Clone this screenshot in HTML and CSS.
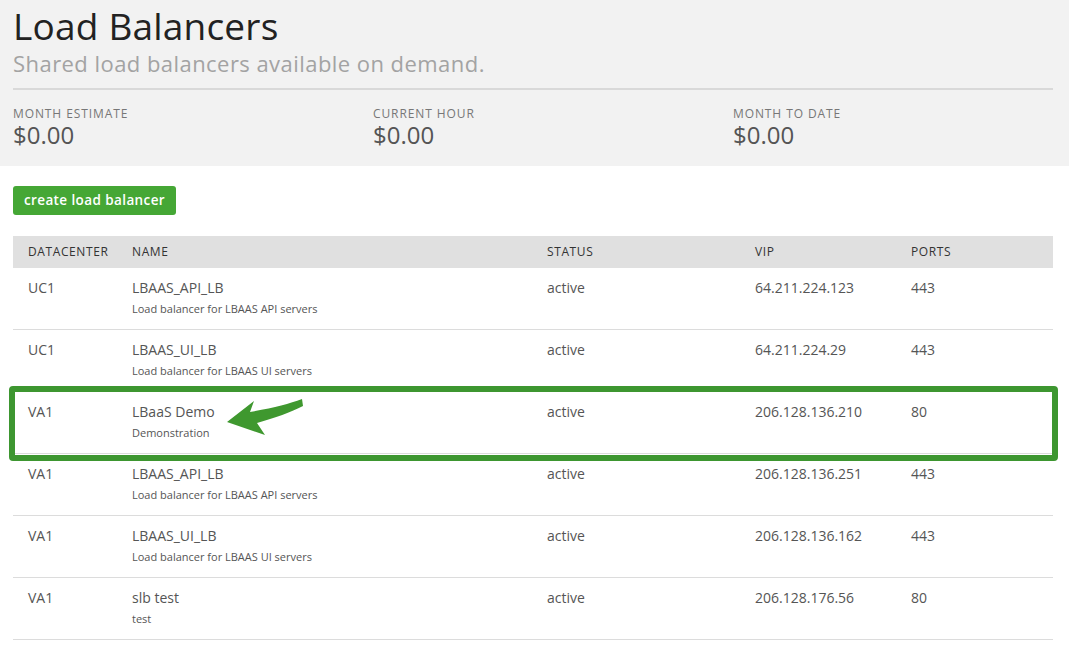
FILE: index.html
```html
<!DOCTYPE html>
<html>
<head>
<meta charset="utf-8">
<link rel="stylesheet" href="styles.css">
</head>
<body>
<header class="hero">
  <h1 class="title">Load Balancers</h1>
  <p class="subtitle">Shared load balancers available on demand.</p>
  <div class="stats">
    <div class="stat"><div class="stat-label">Month Estimate</div><div class="stat-value">$0.00</div></div>
    <div class="stat"><div class="stat-label">Current Hour</div><div class="stat-value">$0.00</div></div>
    <div class="stat"><div class="stat-label">Month to Date</div><div class="stat-value">$0.00</div></div>
  </div>
</header>
<main class="content">
  <button class="btn-create">create load balancer</button>
  <div class="table-wrap">
    <table class="lb-table">
      <colgroup>
        <col class="c-dc"><col class="c-name"><col class="c-status"><col class="c-vip"><col class="c-ports">
      </colgroup>
      <thead>
        <tr><th>Datacenter</th><th>Name</th><th>Status</th><th>VIP</th><th>Ports</th></tr>
      </thead>
      <tbody>
        <tr><td>UC1</td><td><div class="name">LBAAS_API_LB</div><div class="desc">Load balancer for LBAAS API servers</div></td><td>active</td><td>64.211.224.123</td><td>443</td></tr>
        <tr><td>UC1</td><td><div class="name">LBAAS_UI_LB</div><div class="desc">Load balancer for LBAAS UI servers</div></td><td>active</td><td>64.211.224.29</td><td>443</td></tr>
        <tr><td>VA1</td><td><div class="name">LBaaS Demo</div><div class="desc">Demonstration</div></td><td>active</td><td>206.128.136.210</td><td>80</td></tr>
        <tr><td>VA1</td><td><div class="name">LBAAS_API_LB</div><div class="desc">Load balancer for LBAAS API servers</div></td><td>active</td><td>206.128.136.251</td><td>443</td></tr>
        <tr><td>VA1</td><td><div class="name">LBAAS_UI_LB</div><div class="desc">Load balancer for LBAAS UI servers</div></td><td>active</td><td>206.128.136.162</td><td>443</td></tr>
        <tr><td>VA1</td><td><div class="name">slb test</div><div class="desc">test</div></td><td>active</td><td>206.128.176.56</td><td>80</td></tr>
      </tbody>
    </table>
    <div class="highlight"></div>
    <svg class="arrow" width="90" height="40" viewBox="0 0 90 40">
      <path d="M2 24 L29 3 L25 14 C48 10 64 6 77 1 L78 8 C66 14 50 20 32 25 L40 37 Z" fill="#3f982f"/>
    </svg>
  </div>
</main>
</body>
</html>
```
FILE: styles.css
```css
* { box-sizing: border-box; }
html, body { margin: 0; padding: 0; background: #fff; }
body {
  font-family: "Open Sans", "Noto Sans", sans-serif;
  color: #555;
  width: 1069px;
  overflow: hidden;
}
.hero {
  background: #f2f2f2;
  padding: 4px 16px 16px 13px;
  height: 166px;
}
.title {
  margin: 0;
  font-weight: 400;
  font-size: 37px;
  line-height: 44px;
  color: #222;
  letter-spacing: 0.2px;
}
.subtitle {
  margin: 0;
  font-size: 22px;
  line-height: 30px;
  color: #a3a3a3;
  letter-spacing: 0.45px;
  padding-bottom: 10px;
  border-bottom: 2px solid #d9d9d9;
}
.stats {
  display: flex;
  padding-top: 17px;
}
.stat { flex: 0 0 360px; }
.stat:last-child { flex: 1 1 auto; }
.stat-label {
  text-transform: uppercase;
  font-size: 12px;
  line-height: 14px;
  letter-spacing: 0.9px;
  color: #777;
}
.stat-value {
  font-size: 24px;
  line-height: 28px;
  color: #555;
}
.content {
  padding: 20px 16px 0 13px;
}
.btn-create {
  display: block;
  background: #45a735;
  color: #fff;
  border: none;
  border-radius: 3px;
  font-family: "Open Sans", "Noto Sans", sans-serif;
  font-weight: 600;
  font-size: 13.5px;
  letter-spacing: 0.4px;
  line-height: 29px;
  height: 29px;
  width: 163px;
  padding: 0;
  margin-bottom: 21px;
}
.table-wrap { position: relative; width: 1040px; }
.lb-table {
  width: 1040px;
  border-collapse: collapse;
  table-layout: fixed;
}
.c-dc { width: 104px; }
.c-name { width: 415px; }
.c-status { width: 208px; }
.c-vip { width: 156px; }
.c-ports { width: 157px; }
.lb-table th {
  background: #e0e0e0;
  text-align: left;
  font-weight: 400;
  text-transform: uppercase;
  font-size: 12px;
  letter-spacing: 0.6px;
  color: #333;
  height: 32px;
  padding: 0 15px 2px 15px;
}
.lb-table td {
  vertical-align: top;
  padding: 10px 15px 9px 15px;
  font-size: 14px;
  line-height: 20px;
  color: #555;
  border-bottom: 1px solid #dcdcdc;
}
.lb-table td .desc {
  font-size: 11px;
  line-height: 22px;
  color: #555;
}
.highlight {
  position: absolute;
  left: -4px;
  top: 150px;
  width: 1049px;
  height: 75px;
  border: 6px solid #3d9630;
  border-radius: 4px;
  pointer-events: none;
}
.arrow {
  position: absolute;
  left: 212px;
  top: 162px;
}
```
